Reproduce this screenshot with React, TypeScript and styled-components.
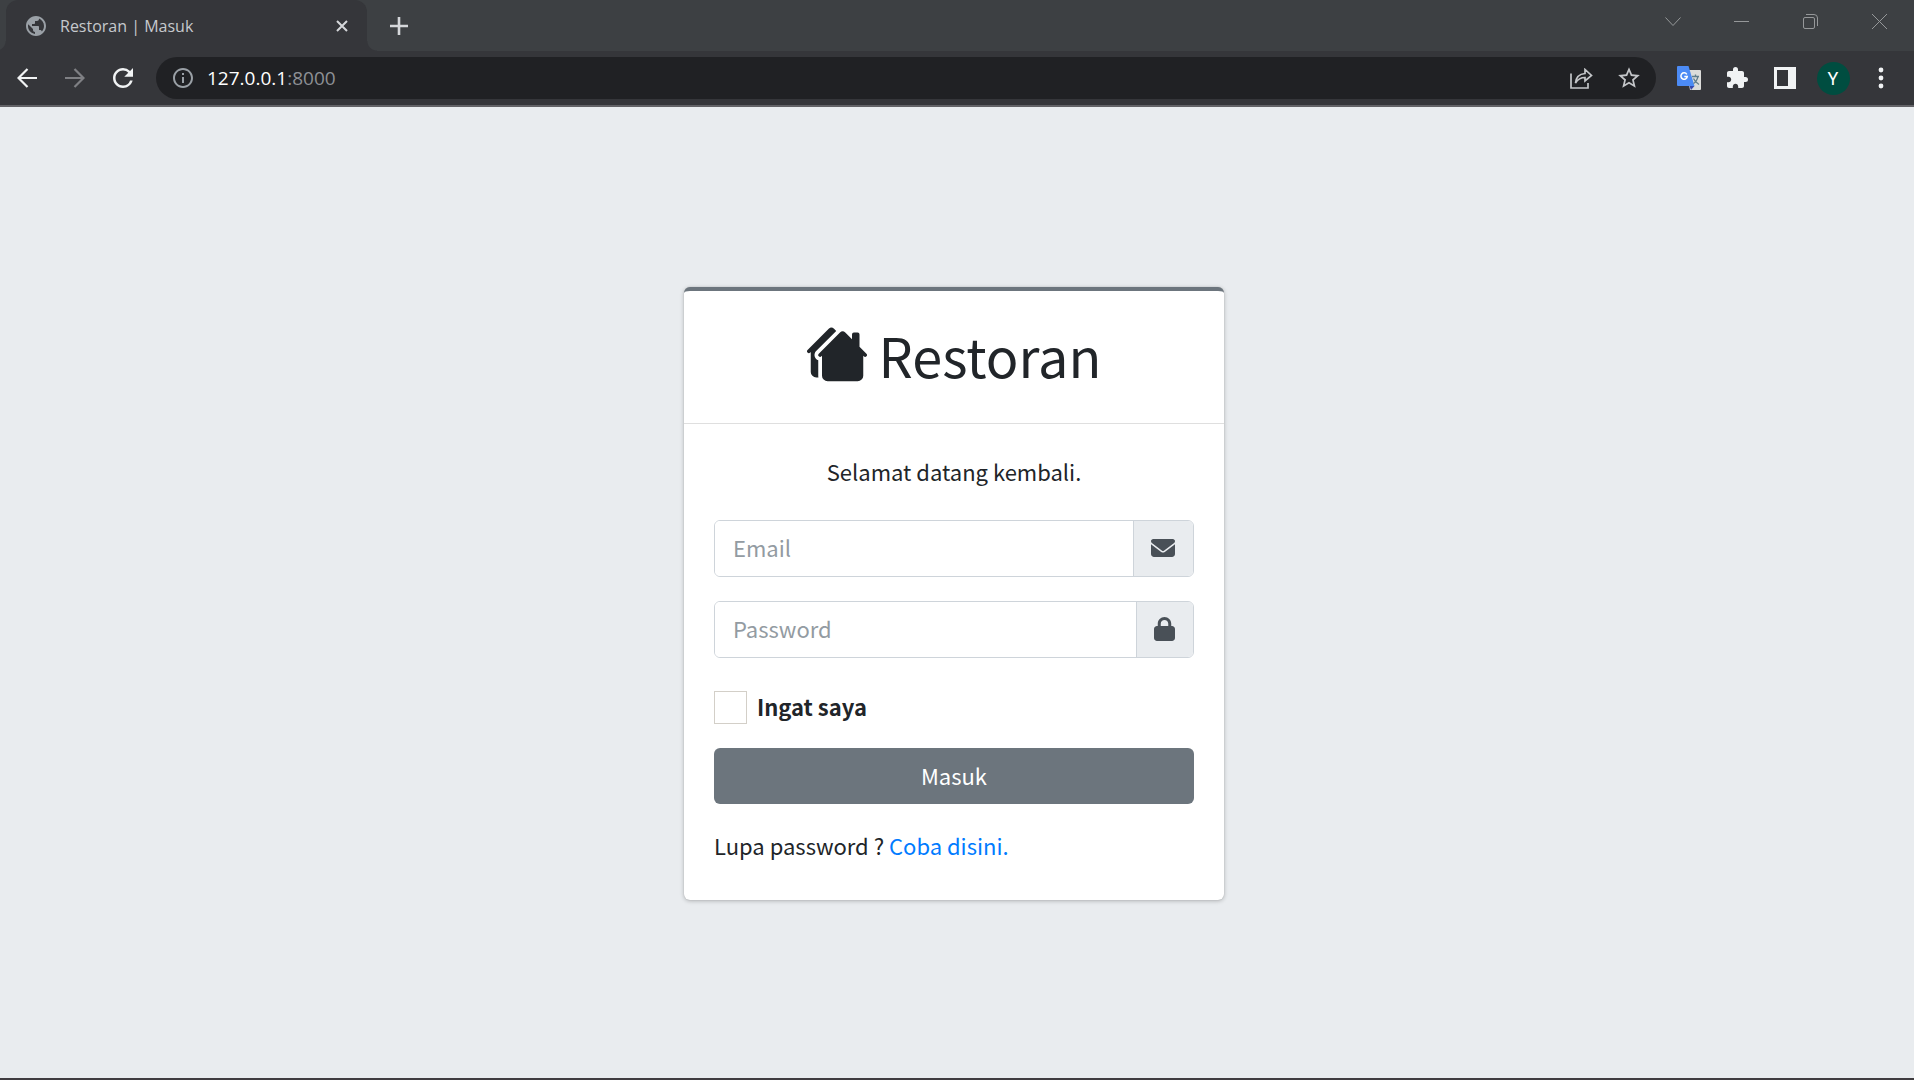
import React from "react";
import styled, { createGlobalStyle } from "styled-components";
import { BsHousesFill } from "react-icons/bs";
import { FaEnvelope, FaLock } from "react-icons/fa6";
import { MdExtension, MdInfoOutline, MdPublic, MdRefresh, MdStarBorder } from "react-icons/md";

const uiFont = `"Open Sans", "Noto Sans", sans-serif`;
const pageFont = `"Noto Sans CJK SC", "Noto Sans", sans-serif`;

const GlobalStyle = createGlobalStyle`
  *, *::before, *::after { box-sizing: border-box; }
  body { margin: 0; background: #e9ecef; }
  button, input { font: inherit; }
`;

const Window = styled.div`
  display: flex;
  flex-direction: column;
  min-height: 100vh;
  border-bottom: 2px solid #403c40;
`;

const TabStrip = styled.div`
  display: flex;
  height: 51px;
  padding-left: 6px;
  background: #3d4043;
  font-family: ${uiFont};
`;

const Tab = styled.div`
  position: relative;
  display: flex;
  align-items: center;
  gap: 12px;
  width: 361px;
  padding: 0 12px 0 18px;
  border-radius: 12px 12px 0 0;
  background: #35363a;
  color: #c6c9cd;

  &::before,
  &::after {
    content: "";
    position: absolute;
    bottom: 0;
    width: 10px;
    height: 10px;
  }
  &::before {
    right: 100%;
    background: radial-gradient(circle at 0 0, transparent 9px, #35363a 10px);
  }
  &::after {
    left: 100%;
    background: radial-gradient(circle at 100% 0, transparent 9px, #35363a 10px);
  }
`;

const TabTitle = styled.span`
  flex: 1;
  font-size: 16px;
  line-height: 24px;
`;

const ChromeButton = styled.button<{ $width: number; $height: number; $color?: string }>`
  display: flex;
  align-items: center;
  justify-content: center;
  flex: none;
  width: ${(p) => p.$width}px;
  height: ${(p) => p.$height}px;
  padding: 0;
  border: 0;
  background: none;
  color: ${(p) => p.$color ?? "#f1f3f4"};
`;

const NewTab = styled(ChromeButton)`
  margin-left: 8px;
`;

const WindowControls = styled.div`
  display: flex;
  margin-left: auto;
`;

const Toolbar = styled.div`
  display: flex;
  align-items: center;
  gap: 9px;
  height: 56px;
  padding: 0 9px 0 3px;
  border-bottom: 2px solid #626266;
  background: #35363a;
  font-family: ${uiFont};
`;

const ButtonGroup = styled.div`
  display: flex;
  align-items: center;
`;

const AddressBar = styled.div`
  display: flex;
  flex: 1;
  align-items: center;
  height: 42px;
  padding: 0 3px 0 15px;
  border-radius: 21px;
  background: #202124;
`;

const Address = styled.span`
  flex: 1;
  padding-left: 12px;
  font-size: 19px;
  line-height: 24px;
  color: #ffffff;
`;

const Port = styled.span`
  color: #8d9095;
`;

const Avatar = styled.span`
  display: flex;
  align-items: center;
  justify-content: center;
  width: 33px;
  height: 33px;
  border-radius: 50%;
  background: #004d40;
  color: #ffffff;
  font-family: Roboto, sans-serif;
  font-size: 18px;
`;

const Page = styled.main`
  display: flex;
  flex: 1;
  align-items: center;
  justify-content: center;
  padding: 2px 6px 0 0;
  background: #e9ecef;
  color: #212529;
  font-family: ${pageFont};
  font-size: 22px;
  line-height: 34px;
`;

const Card = styled.section`
  width: 540px;
  border-top: 4px solid #6c757d;
  border-radius: 6px;
  background: #ffffff;
  box-shadow: 0 0 1px rgba(0, 0, 0, 0.2), 0 1px 4px rgba(0, 0, 0, 0.25);
`;

const CardHeader = styled.header`
  display: flex;
  align-items: center;
  justify-content: center;
  gap: 12px;
  height: 133px;
  padding-bottom: 4px;
  border-bottom: 1px solid #dfdfdf;
`;

const Brand = styled.h1`
  margin: 0;
  font-size: 54px;
  font-weight: 400;
  line-height: 72px;
`;

const Form = styled.form`
  display: flex;
  flex-direction: column;
  gap: 24px;
  padding: 30px 30px 38px;
`;

const Welcome = styled.p`
  margin: 0 0 8px;
  text-align: center;
`;

const InputGroup = styled.div`
  display: flex;
  height: 57px;
  border: 1px solid #ced4da;
  border-radius: 6px;
  overflow: hidden;
`;

const TextInput = styled.input`
  flex: 1;
  min-width: 0;
  padding: 0 18px 4px;
  border: 0;
  outline: 0;
  background: #ffffff;
  color: #495057;

  &::placeholder {
    color: #939ba2;
    opacity: 1;
  }
`;

const Addon = styled.label`
  display: flex;
  align-items: center;
  padding: 0 18px 2px 17px;
  border-left: 1px solid #ced4da;
  background: #e9ecef;
  color: #495057;
`;

const Remember = styled.label`
  display: flex;
  align-items: center;
  gap: 10px;
  height: 33px;
  margin-top: 9px;
  font-weight: 700;
`;

const RememberText = styled.span`
  padding-bottom: 3px;
`;

const Checkbox = styled.input`
  appearance: none;
  width: 33px;
  height: 33px;
  margin: 0;
  border: 1px solid #d3cfc8;
  background: #ffffff;

  &:checked {
    background: #6c757d;
  }
`;

const Submit = styled.button`
  height: 56px;
  padding: 0 0 3px;
  border: 0;
  border-radius: 6px;
  background: #6c757d;
  color: #ffffff;
`;

const Forgot = styled.p`
  margin: 0;
`;

const Link = styled.a`
  color: #007bff;
  text-decoration: none;
`;

const line = { fill: "none", stroke: "currentColor" };

export default function App() {
  return (
    <Window>
      <GlobalStyle />
      <TabStrip>
        <Tab>
          <MdPublic size={24} color="#9aa0a6" />
          <TabTitle>Restoran | Masuk</TabTitle>
          <ChromeButton $width={26} $height={26} $color="#d5d7da" aria-label="Close tab">
            <svg width="12" height="12" {...line} strokeWidth="2">
              <path d="M1 1 11 11M11 1 1 11" />
            </svg>
          </ChromeButton>
        </Tab>
        <NewTab $width={48} $height={51} $color="#d5d7da" aria-label="New tab">
          <svg width="18" height="18" {...line} strokeWidth="2.6">
            <path d="M9 0V18M0 9H18" />
          </svg>
        </NewTab>
        <WindowControls>
          <ChromeButton $width={69} $height={43} $color="#96989a" aria-label="Search tabs">
            <svg width="16" height="10" {...line}>
              <path d="M.5 .5 8 8.500 15.500 .5" />
            </svg>
          </ChromeButton>
          <ChromeButton $width={69} $height={43} $color="#96989a" aria-label="Minimize">
            <svg width="15" height="1" {...line}>
              <path d="M0 .5H15" />
            </svg>
          </ChromeButton>
          <ChromeButton $width={69} $height={43} $color="#96989a" aria-label="Restore">
            <svg width="15" height="15" {...line}>
              <rect x=".5" y="3.500" width="11" height="11" rx="1.500" />
              <path d="M3 .5H11Q14.500 .5 14.500 4V12" />
            </svg>
          </ChromeButton>
          <ChromeButton $width={69} $height={43} $color="#96989a" aria-label="Close">
            <svg width="15" height="15" {...line}>
              <path d="M0 0 15 15M15 0 0 15" />
            </svg>
          </ChromeButton>
        </WindowControls>
      </TabStrip>

      <Toolbar>
        <ButtonGroup>
          <ChromeButton $width={48} $height={42} aria-label="Back">
            <svg width="20" height="20" {...line} strokeWidth="2.200">
              <path d="M20 10H2M10.500 1 1.500 10 10.500 19" />
            </svg>
          </ChromeButton>
          <ChromeButton $width={48} $height={42} $color="#7f8084" aria-label="Forward">
            <svg width="20" height="20" {...line} strokeWidth="2.200">
              <path d="M0 10H18M9.500 1 18.500 10 9.500 19" />
            </svg>
          </ChromeButton>
          <ChromeButton $width={48} $height={42} aria-label="Reload">
            <MdRefresh size={30} />
          </ChromeButton>
        </ButtonGroup>
        <AddressBar>
          <MdInfoOutline size={24} color="#9aa0a6" />
          <Address>
            127.0.0.1<Port>:8000</Port>
          </Address>
          <ChromeButton $width={48} $height={42} $color="#c4c6c9" aria-label="Share">
            <svg width="23" height="21" {...line} strokeWidth="1.700">
              <path d="M1 5.500V20H18V15" />
              <path d="M5.500 15C6 9 9.500 6 15 5.500V1.500L21.500 7.500 15 13V9.500C11 9.500 8 11 5.500 15Z" />
            </svg>
          </ChromeButton>
          <ChromeButton $width={48} $height={42} $color="#c4c6c9" aria-label="Bookmark">
            <MdStarBorder size={26} />
          </ChromeButton>
        </AddressBar>
        <ButtonGroup>
          <ChromeButton $width={48} $height={42} aria-label="Google Translate">
            <svg width="24" height="24">
              <path d="M9 4H23Q24 4 24 5V23Q24 24 23 24H13Z" fill="#dcdcda" />
              <path d="M12.500 20H17.500L14 24Z" fill="#3949ab" />
              <path d="M1 0H11.500L17.500 20H1Q0 20 0 19V1Q0 0 1 0Z" fill="#4c8bf5" />
              <path d="M15 10.500H22M18.500 8.500V10.500M21 10.500Q19.500 16 16.500 17.500M16.500 12.500Q18 16 22 18.500" fill="none" stroke="#607d8b" strokeWidth="1.300" />
              <path d="M9.800 8.300A3.200 3.200 0 1 0 10.300 10.400H7.300" fill="none" stroke="#fff" strokeWidth="1.500" />
            </svg>
          </ChromeButton>
          <ChromeButton $width={48} $height={42} aria-label="Extensions">
            <MdExtension size={24} />
          </ChromeButton>
          <ChromeButton $width={48} $height={42} aria-label="Side panel">
            <svg width="22" height="22">
              <rect width="22" height="22" fill="#f1f3f4" />
              <rect x="3" y="3" width="11" height="16" fill="#35363a" />
            </svg>
          </ChromeButton>
          <ChromeButton $width={48} $height={42} aria-label="Profile">
            <Avatar>Y</Avatar>
          </ChromeButton>
          <ChromeButton $width={48} $height={42} aria-label="Menu">
            <svg width="6" height="22" fill="currentColor">
              <circle cx="3" cy="3" r="2.400" />
              <circle cx="3" cy="11" r="2.400" />
              <circle cx="3" cy="19" r="2.400" />
            </svg>
          </ChromeButton>
        </ButtonGroup>
      </Toolbar>

      <Page>
        <Card>
          <CardHeader>
            <BsHousesFill size={60} />
            <Brand>Restoran</Brand>
          </CardHeader>
          <Form onSubmit={(e) => e.preventDefault()}>
            <Welcome>Selamat datang kembali.</Welcome>
            <InputGroup>
              <TextInput id="email" type="email" placeholder="Email" />
              <Addon htmlFor="email" aria-label="Email">
                <FaEnvelope size={24} />
              </Addon>
            </InputGroup>
            <InputGroup>
              <TextInput id="password" type="password" placeholder="Password" />
              <Addon htmlFor="password" aria-label="Password">
                <svg width="21" height="24" viewBox="0 0 448 512">
                  <FaLock size={512} x={-32} />
                </svg>
              </Addon>
            </InputGroup>
            <Remember>
              <Checkbox type="checkbox" />
              <RememberText>Ingat saya</RememberText>
            </Remember>
            <Submit type="submit">Masuk</Submit>
            <Forgot>
              Lupa password ? <Link href="#lupa">Coba disini.</Link>
            </Forgot>
          </Form>
        </Card>
      </Page>
    </Window>
  );
}
